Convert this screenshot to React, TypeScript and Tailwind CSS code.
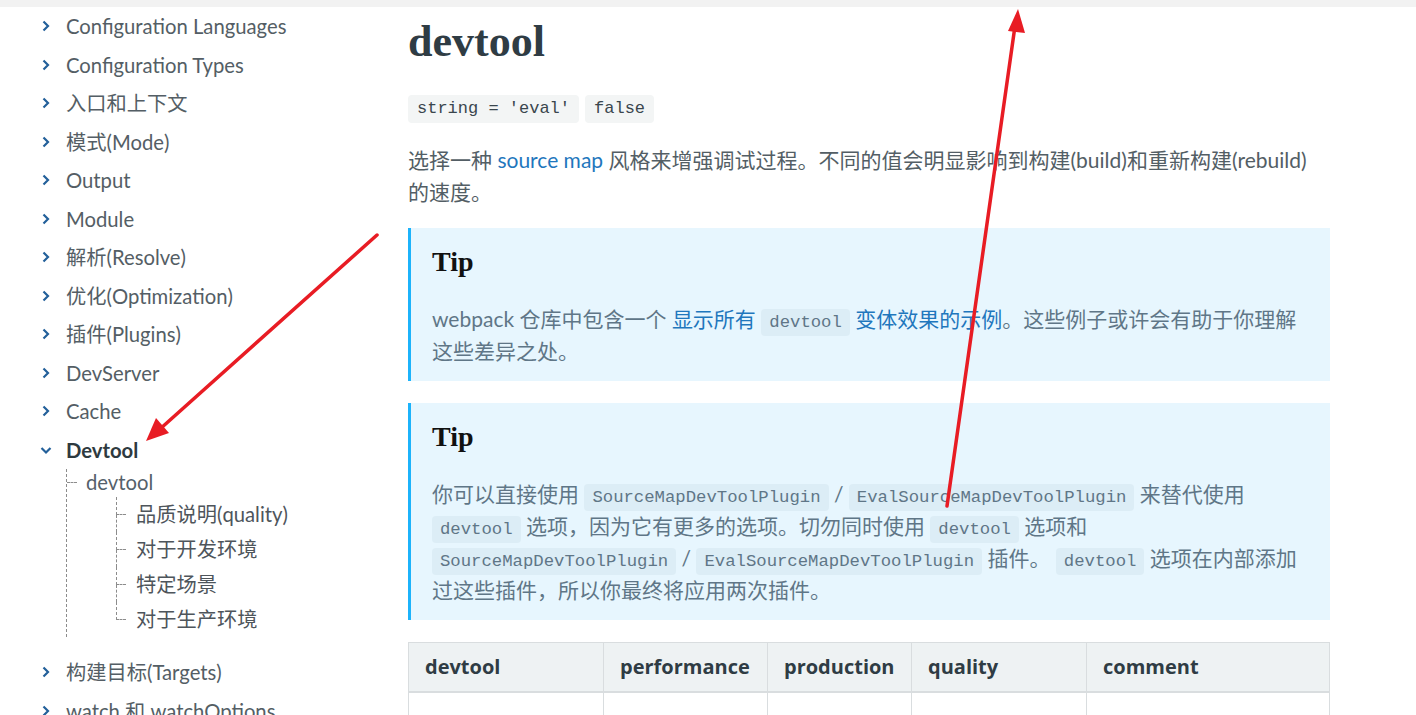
import React from "react";

const SANS = "font-['Lato','Noto_Sans_CJK_SC',sans-serif]";
const HEAD = "font-['Open_Sans','Noto_Sans_CJK_SC',sans-serif]";
const MONO = "font-['Liberation_Mono','Noto_Sans_CJK_SC',monospace]";
const SERIF = "font-['Liberation_Serif',serif]";

const topItems = [
  "Configuration Languages",
  "Configuration Types",
  "入口和上下文",
  "模式(Mode)",
  "Output",
  "Module",
  "解析(Resolve)",
  "优化(Optimization)",
  "插件(Plugins)",
  "DevServer",
  "Cache",
];

const subItems = ["品质说明(quality)", "对于开发环境", "特定场景", "对于生产环境"];

function Chevron({ open }: { open?: boolean }) {
  return (
    <svg width="12" height="12" viewBox="0 0 12 12" className="text-[#23609a]">
      {open ? (
        <path d="M1.5 4l4.5 4.5L10.5 4" fill="none" stroke="currentColor" strokeWidth="2.2" />
      ) : (
        <path d="M3.5 1.5L8 6l-4.5 4.5" fill="none" stroke="currentColor" strokeWidth="2.2" />
      )}
    </svg>
  );
}

function NavItem({ label, open }: { label: string; open?: boolean }) {
  return (
    <div className="flex h-[38.5px] items-center">
      <span className="flex w-[26px] items-center">
        <Chevron open={open} />
      </span>
      <span className={open ? "font-bold text-[#2e3a40]" : "text-[#545e65]"}>{label}</span>
    </div>
  );
}

function Code({ children }: { children: React.ReactNode }) {
  return (
    <code className={`${MONO} rounded-[4px] bg-[#dcedf6] px-[8px] py-[4px] text-[17.3px] leading-none text-[#5f7687]`}>
      {children}
    </code>
  );
}

function Tip({ children, pb }: { children: React.ReactNode; pb: string }) {
  return (
    <div className={`border-l-[3px] border-[#1cb3fb] bg-[#e7f6fe] pl-[21px] pr-[8px] ${pb}`}>
      <div className={`${SERIF} pt-[17px] text-[28px] font-bold leading-[34px] text-[#111]`}>Tip</div>
      <p className="mt-[24px] whitespace-nowrap text-[21px] leading-[31.7px] text-[#5f7687]">{children}</p>
    </div>
  );
}

export default function App() {
  return (
    <div className={`${SANS} relative h-[715px] w-[1416px] overflow-hidden bg-white`}>
      <div className="h-[7px] bg-[#f2f2f2]" />
      <div className="flex">
        {/* sidebar */}
        <aside className="w-[408px] shrink-0 pl-[40px] text-[20.25px]">
          {topItems.map((t) => (
            <NavItem key={t} label={t} />
          ))}
          <NavItem label="Devtool" open />
          <div className="ml-[26px] border-l border-dashed border-[#8c8c8c]">
            <div className="flex h-[26px] items-center">
              <span className="w-[10px] border-t border-dashed border-[#8c8c8c]" />
              <span className="ml-[9px] text-[#55616a]">devtool</span>
            </div>
            <div className="ml-[49px] pt-[2px]">
              {subItems.map((t, i) => (
                <div key={t} className="flex h-[35px]">
                  <div className="flex w-[10px] flex-col">
                    <div className="h-1/2 border-b border-l border-dashed border-[#8c8c8c]" />
                    <div className={i === subItems.length - 1 ? "h-1/2" : "h-1/2 border-l border-dashed border-[#8c8c8c]"} />
                  </div>
                  <span className="ml-[10px] self-center text-[#4e555b]">{t}</span>
                </div>
              ))}
            </div>
          </div>
          <div className="mt-[16px]">
            <NavItem label="构建目标(Targets)" />
            <NavItem label="watch 和 watchOptions" />
          </div>
        </aside>

        {/* main */}
        <main className="w-[922px] shrink-0">
          <h1 className={`${SERIF} mt-[13px] text-[44px] font-bold leading-[44px] text-[#2f3c44]`}>devtool</h1>
          <div className="mt-[31px] flex gap-[6px]">
            <code className={`${MONO} flex h-[28px] items-center rounded-[4px] bg-[#f3f5f5] px-[9px] text-[17px] text-[#3a464d]`}>
              string = 'eval'
            </code>
            <code className={`${MONO} flex h-[28px] items-center rounded-[4px] bg-[#f3f5f5] px-[9px] text-[17px] text-[#3a464d]`}>
              false
            </code>
          </div>
          <p className="mt-[21px] whitespace-nowrap text-[21px] leading-[32px] text-[#535e65]">
            选择一种 <span className="text-[#1f77bd]">source map</span>{" "}
            风格来增强调试过程。不同的值会明显影响到构建(build)和重新构建(rebuild)
            <br />
            的速度。
          </p>

          <div className="mt-[20px]">
            <Tip pb="pb-[15px]">
              webpack 仓库中包含一个{" "}
              <span className="text-[#1f77bd]">
                显示所有 <Code>devtool</Code> 变体效果的示例
              </span>
              。这些例子或许会有助于你理解
              <br />
              这些差异之处。
            </Tip>
          </div>

          <div className="mt-[22px]">
            <Tip pb="pb-[15px]">
              你可以直接使用 <Code>SourceMapDevToolPlugin</Code> / <Code>EvalSourceMapDevToolPlugin</Code>{" "}
              来替代使用
              <br />
              <Code>devtool</Code> 选项，因为它有更多的选项。切勿同时使用 <Code>devtool</Code> 选项和
              <br />
              <Code>SourceMapDevToolPlugin</Code> / <Code>EvalSourceMapDevToolPlugin</Code> 插件。{" "}
              <Code>devtool</Code> 选项在内部添加
              <br />
              过这些插件，所以你最终将应用两次插件。
            </Tip>
          </div>

          <table className={`${HEAD} mt-[22px] w-full border-collapse text-left text-[20px]`}>
            <thead>
              <tr className="bg-[#eef2f3]">
                <th className="h-[49px] w-[195px] border border-b-2 border-[#d9dddf] px-[16px] font-bold text-[#2f3c44]">devtool</th>
                <th className="w-[164px] border border-b-2 border-[#d9dddf] px-[16px] font-bold text-[#2f3c44]">performance</th>
                <th className="w-[144px] border border-b-2 border-[#d9dddf] px-[16px] font-bold text-[#2f3c44]">production</th>
                <th className="w-[175px] border border-b-2 border-[#d9dddf] px-[16px] font-bold text-[#2f3c44]">quality</th>
                <th className="border border-b-2 border-[#d9dddf] px-[16px] font-bold text-[#2f3c44]">comment</th>
              </tr>
            </thead>
            <tbody>
              <tr>
                <td className="h-[50px] border border-[#d9dddf]" />
                <td className="border border-[#d9dddf]" />
                <td className="border border-[#d9dddf]" />
                <td className="border border-[#d9dddf]" />
                <td className="border border-[#d9dddf]" />
              </tr>
            </tbody>
          </table>
        </main>
      </div>

      {/* red annotation arrows */}
      <svg className="pointer-events-none absolute left-0 top-0" width="1416" height="715">
        <g stroke="#e81c24" strokeWidth="3.5" strokeLinecap="round">
          <line x1="377" y1="235" x2="160" y2="429" />
          <line x1="947" y1="506" x2="1015" y2="26" />
        </g>
        <polygon points="146,441 156,418 169,433" fill="#e81c24" />
        <polygon points="1018,9 1008,31 1025,33" fill="#e81c24" />
      </svg>
    </div>
  );
}
